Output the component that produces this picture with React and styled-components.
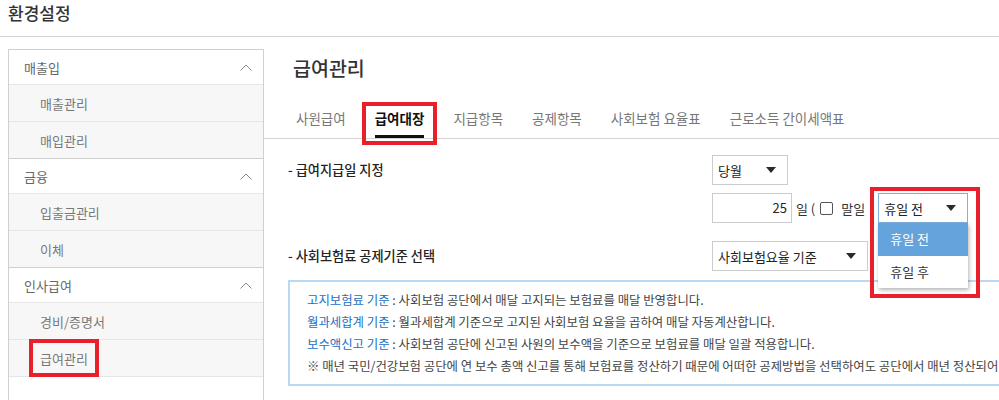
import React from "react";
import styled, { createGlobalStyle } from "styled-components";

const GlobalStyle = createGlobalStyle`
  html, body {
    margin: 0;
    padding: 0;
    background: #fff;
    overflow: hidden;
  }
  body {
    font-family: "Noto Sans CJK KR", "Noto Sans", sans-serif;
    color: #333;
  }
  * {
    box-sizing: border-box;
  }
`;

const groups = [
  { key: "sales", title: "매출입", items: ["매출관리", "매입관리"] },
  { key: "finance", title: "금융", items: ["입출금관리", "이체"] },
  { key: "hr", title: "인사급여", items: ["경비/증명서", "급여관리"] },
];

const tabs = [
  "사원급여",
  "급여대장",
  "지급항목",
  "공제항목",
  "사회보험 요율표",
  "근로소득 간이세액표",
];

const notes = [
  {
    key: "1",
    label: "고지보험료 기준",
    text: "사회보험 공단에서 매달 고지되는 보험료를 매달 반영합니다.",
  },
  {
    key: "2",
    label: "월과세합계 기준",
    text: "월과세합계 기준으로 고지된 사회보험 요율을 곱하여 매달 자동계산합니다.",
  },
  {
    key: "3",
    label: "보수액신고 기준",
    text: "사회보험 공단에 신고된 사원의 보수액을 기준으로 보험료를 매달 일괄 적용합니다.",
  },
];

const ChevronUp = () => (
  <svg width="12" height="7" viewBox="0 0 12 7">
    <polyline points="0.5,6.5 6,1 11.5,6.5" fill="none" stroke="#8a8a8a" strokeWidth="1" />
  </svg>
);

const Caret = () => (
  <svg width="10" height="6" viewBox="0 0 10 6">
    <polygon points="0,0 10,0 5,6" fill="#2b2b2b" />
  </svg>
);

const App = () => {
  return (
    <>
      <GlobalStyle />
      <Page>
        <TopBar>환경설정</TopBar>
        <Body>
          <Sidebar>
            {groups.map((group) => (
              <Group key={group.key}>
                <GroupHead>
                  {group.title}
                  <ChevronUp />
                </GroupHead>
                {group.items.map((item) => (
                  <SubItem key={item}>
                    {item}
                    {item === "급여관리" && (
                      <Annot $top={-1} $bottom={-1} $left={20} $width={70} />
                    )}
                  </SubItem>
                ))}
              </Group>
            ))}
          </Sidebar>

          <Main>
            <PageTitle>급여관리</PageTitle>
            <TabRow>
              {tabs.map((tab) => (
                <Tab key={tab} $active={tab === "급여대장"}>
                  {tab}
                  {tab === "급여대장" && (
                    <Annot $top={22} $bottom={-10} $left={-13} $right={-13} />
                  )}
                </Tab>
              ))}
            </TabRow>

            <Form>
              <FieldRow>
                <Label>- 급여지급일 지정</Label>
                <Controls>
                  <Select $width={76}>
                    당월
                    <Caret />
                  </Select>
                  <Inline>
                    <DayInput>25</DayInput>
                    <Text>일 (</Text>
                    <Check />
                    <Text $gap={8}>말일</Text>
                    <SelectWrap>
                      <Select $width={90} $focused>
                        휴일 전
                        <Caret />
                      </Select>
                      <Menu>
                        <Option $selected>휴일 전</Option>
                        <Option>휴일 후</Option>
                      </Menu>
                      <Annot $top={-6} $bottom={-75} $left={-8} $right={-12} />
                    </SelectWrap>
                  </Inline>
                </Controls>
              </FieldRow>

              <FieldRow $mt={18}>
                <Label>- 사회보험료 공제기준 선택</Label>
                <Controls>
                  <Select $width={156}>
                    사회보험요율 기준
                    <Caret />
                  </Select>
                </Controls>
              </FieldRow>

              <InfoBox>
                {notes.map((note) => (
                  <InfoLine key={note.key}>
                    <InfoLabel>{note.label}</InfoLabel> : {note.text}
                  </InfoLine>
                ))}
                <InfoLine>
                  ※ 매년 국민/건강보험 공단에 연 보수 총액 신고를 통해 보험료를 정산하기 때문에 어떠한 공제방법을 선택하여도 공단에서 매년 정산되어 반영됩니다.
                </InfoLine>
              </InfoBox>
            </Form>
          </Main>
        </Body>
      </Page>
    </>
  );
};

export default App;

const Page = styled.div`
  width: 100%;
  height: 400px;
  overflow: hidden;
`;

const TopBar = styled.div`
  height: 37px;
  padding-left: 8px;
  font-size: 17px;
  font-weight: 500;
  line-height: 25px;
  color: #333;
  border-bottom: 1px solid #d2d2d2;
`;

const Body = styled.div`
  display: flex;
  align-items: flex-start;
`;

const Sidebar = styled.div`
  flex: 0 0 256px;
  margin: 12px 0 0 8px;
  min-height: 420px;
  border-left: 1px solid #d0d0d0;
  border-right: 1px solid #d0d0d0;
`;

const Group = styled.div`
  border-top: 1px solid #cfcfcf;
`;

const GroupHead = styled.div`
  display: flex;
  align-items: center;
  justify-content: space-between;
  height: 35px;
  padding: 0 11px 0 15px;
  font-size: 13px;
  color: #666;
  background: #fff;
  border-bottom: 1px solid #e6e6e6;
`;

const SubItem = styled.div`
  position: relative;
  display: flex;
  align-items: center;
  height: 37px;
  padding-left: 31px;
  font-size: 13px;
  color: #777;
  background: #f7f7f7;
  border-bottom: 1px solid #e6e6e6;

  ${Group}:not(:last-child) &:last-child {
    height: 36px;
    border-bottom: none;
  }
`;

const Annot = styled.span`
  position: absolute;
  top: ${(p) => p.$top}px;
  bottom: ${(p) => p.$bottom}px;
  left: ${(p) => p.$left}px;
  ${(p) => (p.$width ? `width: ${p.$width}px;` : `right: ${p.$right}px;`)}
  border: 4px solid #e8202a;
  pointer-events: none;
  z-index: 5;
`;

const Main = styled.div`
  flex: 1;
  min-width: 0;
`;

const PageTitle = styled.div`
  padding: 19px 0 0 29px;
  font-size: 19.5px;
  font-weight: 500;
  line-height: 24px;
  color: #333;
`;

const TabRow = styled.div`
  display: flex;
  gap: 29px;
  padding-left: 32px;
  border-bottom: 1px solid #d4d4d4;
`;

const Tab = styled.div`
  position: relative;
  padding: 29px 0 8px;
  font-size: 13.5px;
  line-height: 18px;
  white-space: nowrap;
  font-weight: ${(p) => (p.$active ? 700 : 400)};
  color: ${(p) => (p.$active ? "#111" : "#777")};
  border-bottom: 3px solid ${(p) => (p.$active ? "#111" : "transparent")};
`;

const Form = styled.div`
  padding: 16px 0 0 24px;
`;

const FieldRow = styled.div`
  display: grid;
  grid-template-columns: 424px auto;
  align-items: start;
  margin-top: ${(p) => p.$mt || 0}px;
`;

const Label = styled.div`
  font-size: 13.2px;
  font-weight: 500;
  line-height: 30px;
  color: #222;
`;

const Controls = styled.div`
  display: flex;
  flex-direction: column;
  gap: 8px;
`;

const Inline = styled.div`
  display: flex;
  align-items: center;
`;

const Select = styled.div`
  display: flex;
  align-items: center;
  justify-content: space-between;
  width: ${(p) => p.$width}px;
  height: 30px;
  padding: 0 11px 0 5px;
  font-size: 13px;
  color: #222;
  background: #fff;
  border: 1px solid ${(p) => (p.$focused ? "#7fb0df" : "#cccccc")};
`;

const SelectWrap = styled.div`
  position: relative;
  margin-left: 13px;
`;

const Menu = styled.div`
  position: absolute;
  top: 100%;
  left: 0;
  width: 100%;
  background: #fff;
  box-shadow: 1px 2px 4px rgba(0, 0, 0, 0.3);
  z-index: 3;
`;

const Option = styled.div`
  height: 32.5px;
  padding-left: 12px;
  font-size: 13px;
  line-height: 32px;
  color: ${(p) => (p.$selected ? "#fff" : "#333")};
  background: ${(p) => (p.$selected ? "#64a3dc" : "#fff")};
`;

const DayInput = styled.div`
  width: 80px;
  height: 30px;
  padding-right: 4px;
  font-size: 13px;
  line-height: 28px;
  text-align: right;
  color: #222;
  border: 1px solid #cccccc;
`;

const Text = styled.span`
  margin-left: ${(p) => p.$gap || 4}px;
  font-size: 13px;
  color: #333;
  white-space: nowrap;
`;

const Check = styled.span`
  display: inline-block;
  width: 13px;
  height: 13px;
  margin-left: 5px;
  border: 1px solid #555;
  border-radius: 2px;
  background: #fff;
`;

const InfoBox = styled.div`
  width: 780px;
  margin-top: 9px;
  padding: 7px 17px;
  border: 2px solid #b8d8f3;
`;

const InfoLine = styled.div`
  font-size: 12.4px;
  line-height: 22px;
  color: #444;
  white-space: nowrap;
`;

const InfoLabel = styled.span`
  color: #2170c2;
`;
